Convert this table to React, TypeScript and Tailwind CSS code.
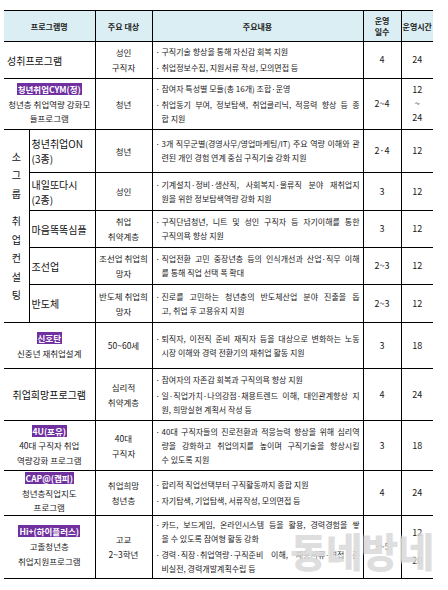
import React from 'react';

const font = "font-['Noto_Sans_CJK_KR','Noto_Sans',sans-serif]";
const cell = 'border-b border-black p-0 align-middle';
const cellR = 'border-b border-r border-black p-0 align-middle';

function Label({ children }: { children: React.ReactNode }) {
  return (
    <span className="bg-[#7030a0] px-[1px] text-[8.5px] font-bold leading-[13px] text-white">
      {children}
    </span>
  );
}

function Content({ paras }: { paras: string[][] }) {
  return (
    <div className="flex flex-col gap-[2px] pl-[3px] pr-[3px] text-[8px] leading-[14px] text-[#1a1a1a]">
      {paras.map((lines, i) => (
        <div key={i} className="flex">
          <span className="w-[6px] shrink-0">·</span>
          <div className="min-w-0 flex-1">
            {lines.map((l, j) => (
              <div
                key={j}
                className={
                  j < lines.length - 1
                    ? 'whitespace-nowrap text-justify [text-align-last:justify]'
                    : 'whitespace-nowrap'
                }
              >
                {l}
              </div>
            ))}
          </div>
        </div>
      ))}
    </div>
  );
}

function Lines({ lines, className }: { lines: string[]; className?: string }) {
  return (
    <div className={className}>
      {lines.map((l, i) => (
        <div key={i}>{l}</div>
      ))}
    </div>
  );
}

const target = 'text-center text-[8.5px] leading-[15px] text-[#1a1a1a]';
const num = 'text-center text-[9px] leading-[14px] text-[#1a1a1a]';
const name = 'text-[10px] leading-[15px] text-[#111]';
const sub = 'text-center text-[8.5px] leading-[14.5px] text-[#1a1a1a]';

const groupRows = [
  {
    name: ['청년취업ON', '(3종)'],
    target: ['청년'],
    paras: [['3개 직무군별(경영사무/영업마케팅/IT) 주요 역량 이해와 관', '련된 개인 경험 연계 중심 구직기술 강화 지원']],
    days: ['2·4'],
    hours: ['12'],
    h: 'h-[43px]',
  },
  {
    name: ['내일또다시', '(2종)'],
    target: ['성인'],
    paras: [['기계설치·정비·생산직, 사회복지·물류직 분야 재취업지', '원을 위한 정보탐색역량 강화 지원']],
    days: ['3'],
    hours: ['12'],
    h: 'h-[38px]',
  },
  {
    name: ['마음똑똑심플'],
    target: ['취업', '취약계층'],
    paras: [['구직단념청년, 니트 및 성인 구직자 등 자기이해를 통한', '구직의욕 향상 지원']],
    days: ['3'],
    hours: ['12'],
    h: 'h-[37px]',
  },
  {
    name: ['조선업'],
    target: ['조선업 취업희', '망자'],
    paras: [['직업전환 고민 중장년층 등의 인식개선과 산업·직무 이해', '를 통해 직업 선택 폭 확대']],
    days: ['2~3'],
    hours: ['12'],
    h: 'h-[37px]',
  },
  {
    name: ['반도체'],
    target: ['반도체 취업희', '망자'],
    paras: [['진로를 고민하는 청년층의 반도체산업 분야 진출을 돕', '고, 취업 후 고용유지 지원']],
    days: ['2~3'],
    hours: ['12'],
    h: 'h-[38px]',
  },
];

export default function App() {
  return (
    <div className={`relative h-[590px] w-[448px] overflow-hidden bg-white pl-[4px] pt-[10px] ${font}`}>
      <table className="w-[429px] table-fixed border-collapse border-t border-black">
        <colgroup>
          <col className="w-[25px]" />
          <col className="w-[66px]" />
          <col className="w-[57px]" />
          <col className="w-[211px]" />
          <col className="w-[38px]" />
          <col className="w-[32px]" />
        </colgroup>
        <tbody>
          {/* header */}
          <tr className="h-[31px] bg-[#dbeef3] text-center text-[8px] font-bold leading-[11px] text-[#222]">
            <td colSpan={2} className={cellR}>프로그램명</td>
            <td className={cellR}>주요 대상</td>
            <td className={cellR}>주요내용</td>
            <td className={cellR}>
              운영
              <br />
              일수
            </td>
            <td className={cell}>운영시간</td>
          </tr>

          <tr className="h-[37px]">
            <td colSpan={2} className={cellR}>
              <div className={`${name} pl-[3px]`}>성취프로그램</div>
            </td>
            <td className={cellR}>
              <Lines lines={['성인', '구직자']} className={target} />
            </td>
            <td className={cellR}>
              <Content paras={[['구직기술 향상을 통해 자신감 회복 지원'], ['취업정보수집, 지원서류 작성, 모의면접 등']]} />
            </td>
            <td className={cellR}>
              <div className={num}>4</div>
            </td>
            <td className={cell}>
              <div className={num}>24</div>
            </td>
          </tr>

          <tr className="h-[51px]">
            <td colSpan={2} className={cellR}>
              <div className={sub}>
                <div>
                  <Label>청년취업CYM(정)</Label>
                </div>
                <div>청년층 취업역량 강화모</div>
                <div>듈프로그램</div>
              </div>
            </td>
            <td className={cellR}>
              <Lines lines={['청년']} className={target} />
            </td>
            <td className={cellR}>
              <Content
                paras={[
                  ['참여자 특성별 모듈(총 16개) 조합·운영'],
                  ['취업동기 부여, 정보탐색, 취업클리닉, 적응력 향상 등 종', '합 지원'],
                ]}
              />
            </td>
            <td className={cellR}>
              <div className={num}>2~4</div>
            </td>
            <td className={cell}>
              <Lines lines={['12', '~', '24']} className={num} />
            </td>
          </tr>

          {groupRows.map((r, i) => (
            <tr key={i} className={r.h}>
              {i === 0 && (
                <td rowSpan={5} className={cellR}>
                  <div className="flex flex-col items-center text-[10px] leading-[18.5px] text-[#111]">
                    <span>소</span>
                    <span>그</span>
                    <span>룹</span>
                    <span className="h-[9px]" />
                    <span>취</span>
                    <span>업</span>
                    <span>컨</span>
                    <span>설</span>
                    <span>팅</span>
                  </div>
                </td>
              )}
              <td className={cellR}>
                <Lines lines={r.name} className={`${name} pl-[2px]`} />
              </td>
              <td className={cellR}>
                <Lines lines={r.target} className={target} />
              </td>
              <td className={cellR}>
                <Content paras={r.paras} />
              </td>
              <td className={cellR}>
                <Lines lines={r.days} className={num} />
              </td>
              <td className={cell}>
                <Lines lines={r.hours} className={num} />
              </td>
            </tr>
          ))}

          <tr className="h-[46px]">
            <td colSpan={2} className={cellR}>
              <div className={sub}>
                <div>
                  <Label>신호탄</Label>
                </div>
                <div>신중년 재취업설계</div>
              </div>
            </td>
            <td className={cellR}>
              <Lines lines={['50~60세']} className={target} />
            </td>
            <td className={cellR}>
              <Content paras={[['퇴직자, 이전직 준비 재직자 등을 대상으로 변화하는 노동', '시장 이해와 경력 전환기의 재취업 활동 지원']]} />
            </td>
            <td className={cellR}>
              <div className={num}>3</div>
            </td>
            <td className={cell}>
              <div className={num}>18</div>
            </td>
          </tr>

          <tr className="h-[52px]">
            <td colSpan={2} className={cellR}>
              <div className={`${name} text-center`}>취업희망프로그램</div>
            </td>
            <td className={cellR}>
              <Lines lines={['심리적', '취약계층']} className={target} />
            </td>
            <td className={cellR}>
              <Content
                paras={[
                  ['참여자의 자존감 회복과 구직의욕 향상 지원'],
                  ['일·직업가치·나의강점·채용트렌드 이해, 대인관계향상 지', '원, 희망실현 계획서 작성 등'],
                ]}
              />
            </td>
            <td className={cellR}>
              <div className={num}>4</div>
            </td>
            <td className={cell}>
              <div className={num}>24</div>
            </td>
          </tr>

          <tr className="h-[50px]">
            <td colSpan={2} className={cellR}>
              <div className={sub}>
                <div>
                  <Label>4U(포유)</Label>
                </div>
                <div>40대 구직자 취업</div>
                <div>역량강화 프로그램</div>
              </div>
            </td>
            <td className={cellR}>
              <Lines lines={['40대', '구직자']} className={target} />
            </td>
            <td className={cellR}>
              <Content
                paras={[
                  [
                    '40대 구직자들의 진로전환과 적응능력 향상을 위해 심리역',
                    '량을 강화하고 취업의지를 높이며 구직기술을 향상시킬',
                    '수 있도록 지원',
                  ],
                ]}
              />
            </td>
            <td className={cellR}>
              <div className={num}>3</div>
            </td>
            <td className={cell}>
              <div className={num}>18</div>
            </td>
          </tr>

          <tr className="h-[43px]">
            <td colSpan={2} className={cellR}>
              <div className={sub}>
                <div>
                  <Label>CAP@(캡피)</Label>
                </div>
                <div>청년층직업지도</div>
                <div>프로그램</div>
              </div>
            </td>
            <td className={cellR}>
              <Lines lines={['취업희망', '청년층']} className={target} />
            </td>
            <td className={cellR}>
              <Content paras={[['합리적 직업선택부터 구직활동까지 종합 지원'], ['자기탐색, 기업탐색, 서류작성, 모의면접 등']]} />
            </td>
            <td className={cellR}>
              <div className={num}>4</div>
            </td>
            <td className={cell}>
              <div className={num}>24</div>
            </td>
          </tr>

          <tr className="h-[63px]">
            <td colSpan={2} className={cellR}>
              <div className={`${sub} leading-[15px]`}>
                <div>
                  <Label>Hi+(하이플러스)</Label>
                </div>
                <div>고졸청년층</div>
                <div>취업지원프로그램</div>
              </div>
            </td>
            <td className={cellR}>
              <Lines lines={['고교', '2~3학년']} className={target} />
            </td>
            <td className={cellR}>
              <Content
                paras={[
                  ['카드, 보드게임, 온라인시스템 등을 활용, 경력경험을 쌓', '을 수 있도록 참여형 활동 강화'],
                  ['경력·직장·취업역량·구직준비 이해, 채용서류·면접 준', '비실전, 경력개발계획수립 등'],
                ]}
              />
            </td>
            <td className={cellR}>
              <div className={num}>3~5</div>
            </td>
            <td className={cell}>
              <Lines lines={['12', '~', '20']} className={num} />
            </td>
          </tr>
        </tbody>
      </table>

      {/* watermark */}
      <div className="pointer-events-none absolute left-[290px] top-[522px] text-[40px] font-black leading-[56px] tracking-[-1px] text-[#a0a0a0]/35 [text-shadow:0_0_3px_rgba(255,255,255,1)]">
        동네방네
      </div>
    </div>
  );
}
